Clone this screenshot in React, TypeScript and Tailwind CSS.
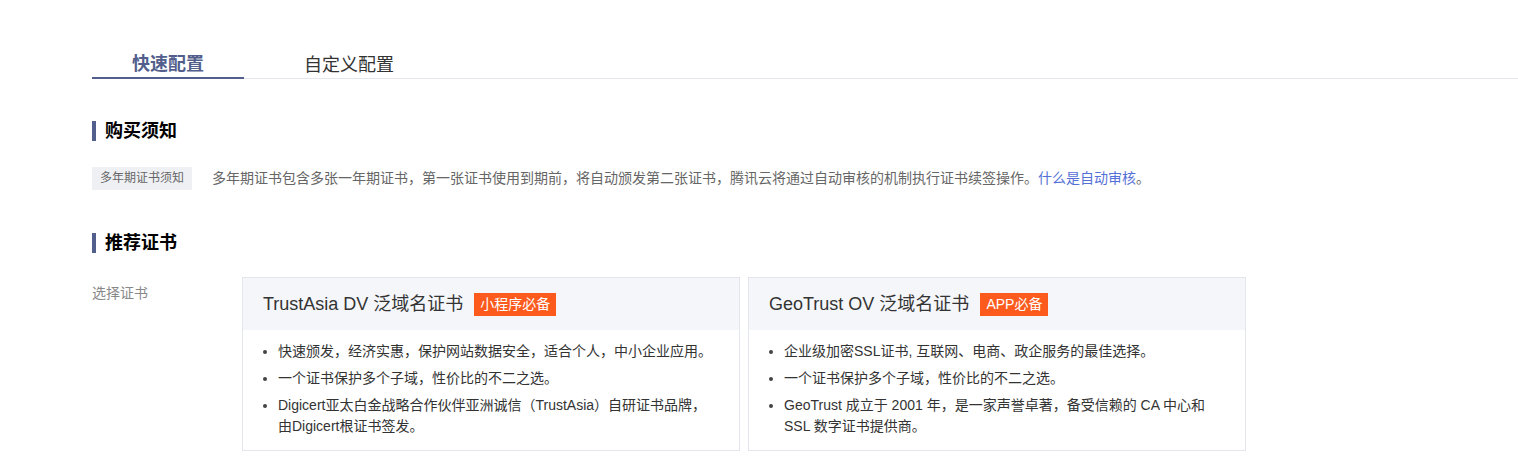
const font = { fontFamily: '"Liberation Sans", "Noto Sans CJK SC", sans-serif' };

type Cert = {
  name: string;
  badge: string;
  points: string[];
};

const certs: Cert[] = [
  {
    name: 'TrustAsia DV 泛域名证书',
    badge: '小程序必备',
    points: [
      '快速颁发，经济实惠，保护网站数据安全，适合个人，中小企业应用。',
      '一个证书保护多个子域，性价比的不二之选。',
      'Digicert亚太白金战略合作伙伴亚洲诚信（TrustAsia）自研证书品牌，由Digicert根证书签发。',
    ],
  },
  {
    name: 'GeoTrust OV 泛域名证书',
    badge: 'APP必备',
    points: [
      '企业级加密SSL证书, 互联网、电商、政企服务的最佳选择。',
      '一个证书保护多个子域，性价比的不二之选。',
      'GeoTrust 成立于 2001 年，是一家声誉卓著，备受信赖的 CA 中心和 SSL 数字证书提供商。',
    ],
  },
];

function SectionTitle({ children }: { children: string }) {
  return (
    <div className="flex items-center h-[20px]">
      <span className="w-[4px] h-[20px] bg-[#525e8c]" />
      <h2 className="ml-[9px] text-[18px] leading-[20px] font-bold text-black">{children}</h2>
    </div>
  );
}

function CertCard({ cert }: { cert: Cert }) {
  return (
    <div className="w-[498px] border border-[#e3e6ec] bg-white">
      {/* Header */}
      <div className="h-[52px] bg-[#f5f6fa] flex items-center pl-[20px]">
        <span className="text-[18px] text-[#333]">{cert.name}</span>
        <span className="ml-[11px] h-[23px] px-[6px] bg-[#fd5a1e] text-white text-[14px] leading-[23px]">
          {cert.badge}
        </span>
      </div>

      {/* Points */}
      <ul className="list-disc pl-[35px] pr-[24px] pt-[11px] pb-[13px] space-y-[6px] text-[14px] leading-[21px] text-[#333]">
        {cert.points.map((p, i) => (
          <li key={i} className="marker:text-[#444]">
            {p}
          </li>
        ))}
      </ul>
    </div>
  );
}

export default function App() {
  return (
    <div className="min-h-screen bg-white pl-[92px] pt-[51px]" style={font}>
      {/* Tabs */}
      <div className="flex border-b border-[#e3e6ec]">
        <button className="px-[40px] h-[28px] -mb-px border-b-2 border-[#525e8c] text-[18px] leading-[26px] font-bold text-[#525e8c]">
          快速配置
        </button>
        <button className="ml-[20px] px-[40px] h-[28px] -mb-px text-[18px] leading-[26px] text-[#333]">
          自定义配置
        </button>
      </div>

      {/* 购买须知 */}
      <div className="mt-[42px]">
        <SectionTitle>购买须知</SectionTitle>
        <div className="mt-[26px] flex items-center">
          <span className="w-[100px] h-[23px] bg-[#eff0f4] text-[12px] leading-[23px] text-[#666] text-center">
            多年期证书须知
          </span>
          <p className="ml-[20px] text-[14px] leading-[23px] text-[#666]">
            多年期证书包含多张一年期证书，第一张证书使用到期前，将自动颁发第二张证书，腾讯云将通过自动审核的机制执行证书续签操作。
            <a className="text-[#5470d6] cursor-pointer">什么是自动审核</a>。
          </p>
        </div>
      </div>

      {/* 推荐证书 */}
      <div className="mt-[43px]">
        <SectionTitle>推荐证书</SectionTitle>
        <div className="mt-[24px] flex">
          <div className="w-[150px] pt-[6px] text-[14px] leading-[20px] text-[#888]">选择证书</div>
          <div className="flex gap-[8px]">
            {certs.map((c) => (
              <CertCard key={c.name} cert={c} />
            ))}
          </div>
        </div>
      </div>
    </div>
  );
}
